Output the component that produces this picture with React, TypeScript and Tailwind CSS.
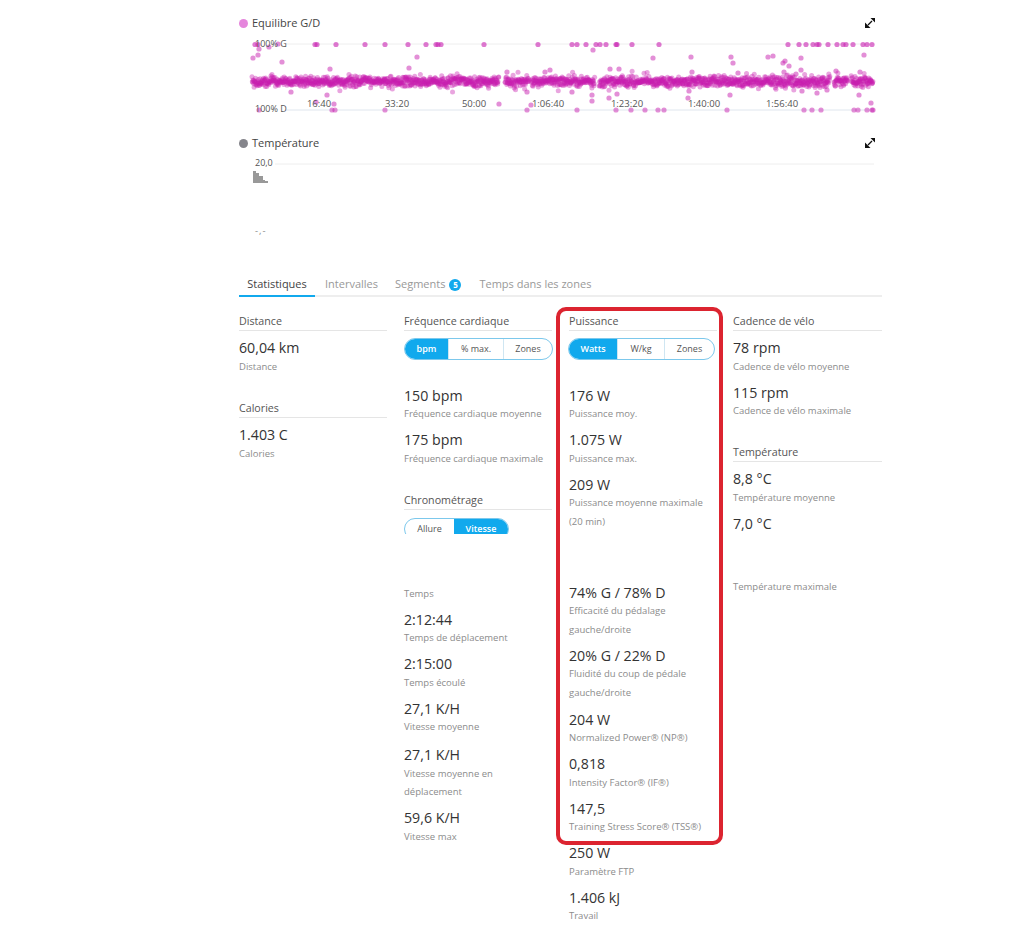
const topRow = [255, 258, 315, 317, 336, 365, 385, 408, 426, 436, 438, 441, 484, 538, 572, 577, 586, 596, 600, 606, 616, 617, 632, 659, 788, 799, 806, 813, 817, 819, 828, 837, 843, 846, 853, 863, 867, 872]
const bottomRow = [259, 332, 335, 385, 577, 616, 631, 645, 658, 664, 727, 804, 812, 821, 854, 858, 867, 872, 873]
const outliers: [number, number][] = [
  [253, 58], [258, 55], [259, 49], [269, 47], [278, 44], [282, 62], [330, 69], [409, 68], [417, 57], [316, 102], [334, 104], [327, 95], [291, 92], [499, 104], [531, 105], [527, 110], [527, 92], [550, 70], [545, 72], [507, 72],
  [593, 50], [610, 69], [619, 69], [653, 58], [691, 57], [692, 72], [731, 57], [733, 63], [738, 73], [768, 57], [773, 56], [783, 63], [785, 61], [789, 66], [784, 72], [801, 58], [801, 70], [796, 74], [836, 71], [860, 72], [864, 55], [871, 103], [859, 95], [592, 95], [592, 101], [609, 98], [617, 94], [689, 91], [688, 98], [730, 95], [572, 92], [827, 90], [817, 93], [802, 91],
]

// same dots on every render
function bandDots() {
  let seed = 12345
  const rnd = () => {
    seed = (seed * 1664525 + 1013904223) % 4294967296
    return seed / 4294967296
  }
  const dots: [number, number][] = []
  for (let x = 252; x < 873; x += 0.35) {
    if ((x > 499 && x < 505) || (x > 529 && x < 531) || (x > 595 && x < 599) || (x > 830 && x < 834) || (x > 848 && x < 851)) continue
    const spread = rnd() < 0.12 ? 11 : x > 770 && x < 830 ? 8 : 6
    dots.push([x, 81.5 + (rnd() + rnd() - 1) * spread])
  }
  return dots
}

function ExpandIcon() {
  return (
    <svg width="10" height="10" viewBox="0 0 10 10" className="mr-[7px]">
      <path d="M5.5 0H10V4.5Z" fill="#111" />
      <path d="M0 10V4.5L5.5 10Z" fill="#111" />
      <line x1="3" y1="7" x2="7" y2="3" stroke="#111" strokeWidth="1.3" />
    </svg>
  )
}

function ChartHeader({ title, color }: { title: string; color: string }) {
  return (
    <div className="flex items-center justify-between h-[18px]">
      <div className="flex items-center gap-[4px] text-[11px] text-[#444]">
        <span className={`w-[9px] h-[9px] rounded-full ${color}`} />
        {title}
      </div>
      <ExpandIcon />
    </div>
  )
}

function BalanceChart() {
  const labels: [number, string][] = [[319, '16:40'], [397, '33:20'], [474, '50:00'], [548, '1:06:40'], [627, '1:23:20'], [704, '1:40:00'], [782, '1:56:40']]
  return (
    <svg width="643" height="86" viewBox="239 32 643 86" className="block">
      <line x1="285" x2="874" y1="44" y2="44" stroke="#eeeeee" />
      <line x1="285" x2="874" y1="110" y2="110" stroke="#dfe6ee" />
      {bandDots().map(([x, y], i) => <circle key={i} cx={x} cy={y} r="2.5" fill="#c81fb0" fillOpacity="0.4" />)}
      {topRow.map((x, i) => <circle key={i} cx={x} cy="44.5" r="2.6" fill="#c81fb0" fillOpacity="0.6" />)}
      {bottomRow.map((x, i) => <circle key={i} cx={x} cy="110" r="2.6" fill="#c81fb0" fillOpacity="0.5" />)}
      {outliers.map(([x, y], i) => <circle key={i} cx={x} cy={y} r="2.6" fill="#c81fb0" fillOpacity="0.5" />)}
      <text x="255" y="47" fontSize="9" fill="#555">100% G</text>
      <text x="255" y="112" fontSize="9" fill="#555">100% D</text>
      {labels.map(([x, t]) => <text key={t} x={x} y="107" fontSize="9.5" fill="#555" textAnchor="middle">{t}</text>)}
    </svg>
  )
}

function TemperatureChart() {
  return (
    <svg width="643" height="100" viewBox="239 152 643 100" className="block">
      <line x1="275" x2="874" y1="164" y2="164" stroke="#eeeeee" />
      <text x="255" y="166" fontSize="9" fill="#555">20,0</text>
      <path d="M253 183V171H256V173H259V176H263V180H265V181H268V183Z" fill="#999" />
      <text x="255" y="234" fontSize="9.5" fill="#888" letterSpacing="1">-,-</text>
    </svg>
  )
}

function Tabs() {
  return (
    <div className="flex items-start h-[28px] border-b-2 border-[#eeeeee] text-[11px] text-[#999] leading-[30px]">
      <div className="w-[76px] h-[28px] border-b-2 border-[#11a9ed] text-center text-[#444]">Statistiques</div>
      <div className="ml-[10px]">Intervalles</div>
      <div className="ml-[17px] flex items-start">
        Segments
        <span className="ml-[4px] mt-[10px] w-[12px] h-[12px] rounded-full bg-[#11a9ed] text-white text-[8px] font-bold leading-[12px] text-center">5</span>
      </div>
      <div className="ml-[18px]">Temps dans les zones</div>
    </div>
  )
}

function Heading({ children, className = '' }: { children: string; className?: string }) {
  return <div className={`h-[19px] border-b border-[#e5e5e5] text-[10.7px] text-[#555] leading-[18px] ${className}`}>{children}</div>
}

function Stat({ value, label, className = '' }: { value?: string; label: string; className?: string }) {
  return (
    <div className={`mb-[6.5px] ${className}`}>
      <div className="h-[19.5px] text-[14.2px] text-[#333] leading-[19px]">{value}</div>
      <div className="min-h-[18.5px] text-[9.5px] text-[#8c8c8c] leading-[18.5px]">{label}</div>
    </div>
  )
}

function Toggle({ items, widths, active = 0 }: { items: string[]; widths: string[]; active?: number }) {
  return (
    <div className="flex h-[22px] rounded-[11px] border border-[#7cc8ec] overflow-hidden text-[9px] text-[#555] font-medium">
      {items.map((t, i) => (
        <div key={t} className={`flex items-center justify-center ${widths[i]} ${i === active ? 'bg-[#11a9ed] text-white font-semibold' : ''} ${i > 0 && i !== active ? 'border-l border-[#cfe6f2]' : ''}`}>{t}</div>
      ))}
    </div>
  )
}

export default function App() {
  return (
    <div className="relative w-[1024px] h-[933px] overflow-hidden bg-white" style={{ fontFamily: '"Open Sans", sans-serif' }}>
      <div className="ml-[239px] w-[643px] pt-[14px]">
        <ChartHeader title="Equilibre G/D" color="bg-[#e586dc]" />
        <BalanceChart />
        <div className="mt-[16px]">
          <ChartHeader title="Température" color="bg-[#85858b]" />
        </div>
        <TemperatureChart />
        <div className="mt-[17px]">
          <Tabs />
        </div>

        <div className="grid grid-cols-[148px_148px_148px_148px] gap-x-[17px] pt-[15px] h-[636px]">
          <div className="flex flex-col">
            <Heading>Distance</Heading>
            <Stat value="60,04 km" label="Distance" className="mt-[7px]" />
            <Heading className="mt-[16.5px]">Calories</Heading>
            <Stat value="1.403 C" label="Calories" className="mt-[7px]" />
          </div>

          <div className="flex flex-col">
            <Heading>Fréquence cardiaque</Heading>
            <div className="mt-[7px] mr-[-1px]">
              <Toggle items={['bpm', '% max.', 'Zones']} widths={['w-[43px]', 'w-[55px]', 'flex-1']} />
            </div>
            <Stat value="150 bpm" label="Fréquence cardiaque moyenne" className="mt-[25.5px]" />
            <Stat value="175 bpm" label="Fréquence cardiaque maximale" />
            <Heading className="mt-[16.5px]">Chronométrage</Heading>
            <div className="mt-[8px] h-[16px] w-[105px] overflow-hidden shrink-0">
              <Toggle items={['Allure', 'Vitesse']} widths={['w-[49px]', 'flex-1']} active={1} />
            </div>
            <Stat label="Temps" className="mt-[31px]" />
            <Stat value="2:12:44" label="Temps de déplacement" />
            <Stat value="2:15:00" label="Temps écoulé" />
            <Stat value="27,1 K/H" label="Vitesse moyenne" />
            <Stat value="27,1 K/H" label="Vitesse moyenne en déplacement" className="mt-[2px] w-[110px]" />
            <Stat value="59,6 K/H" label="Vitesse max" />
          </div>

          <div className="flex flex-col">
            <Heading>Puissance</Heading>
            <div className="mt-[7px] ml-[-1px] mr-[2px]">
              <Toggle items={['Watts', 'W/kg', 'Zones']} widths={['w-[48px]', 'w-[47px]', 'flex-1']} />
            </div>
            <Stat value="176 W" label="Puissance moy." className="mt-[25.5px]" />
            <Stat value="1.075 W" label="Puissance max." />
            <Stat value="209 W" label="Puissance moyenne maximale (20 min)" />
            <Stat value="74% G / 78% D" label="Efficacité du pédalage gauche/droite" className="mt-[45px]" />
            <Stat value="20% G / 22% D" label="Fluidité du coup de pédale gauche/droite" />
            <Stat value="204 W" label="Normalized Power® (NP®)" className="mt-[1px]" />
            <Stat value="0,818" label="Intensity Factor® (IF®)" />
            <Stat value="147,5" label="Training Stress Score® (TSS®)" />
            <Stat value="250 W" label="Paramètre FTP" />
            <Stat value="1.406 kJ" label="Travail" />
          </div>

          <div className="flex flex-col -ml-[1px]">
            <Heading>Cadence de vélo</Heading>
            <Stat value="78 rpm" label="Cadence de vélo moyenne" className="mt-[7px]" />
            <Stat value="115 rpm" label="Cadence de vélo maximale" />
            <Heading className="mt-[16px]">Température</Heading>
            <Stat value="8,8 °C" label="Température moyenne" className="mt-[7px]" />
            <Stat value="7,0 °C" label="" />
            <Stat label="Température maximale" />
          </div>
        </div>
      </div>

      <div className="absolute left-[556px] top-[307px] w-[167px] h-[538px] rounded-[10px] border-[4px] border-[#dc2430]" />
    </div>
  )
}
